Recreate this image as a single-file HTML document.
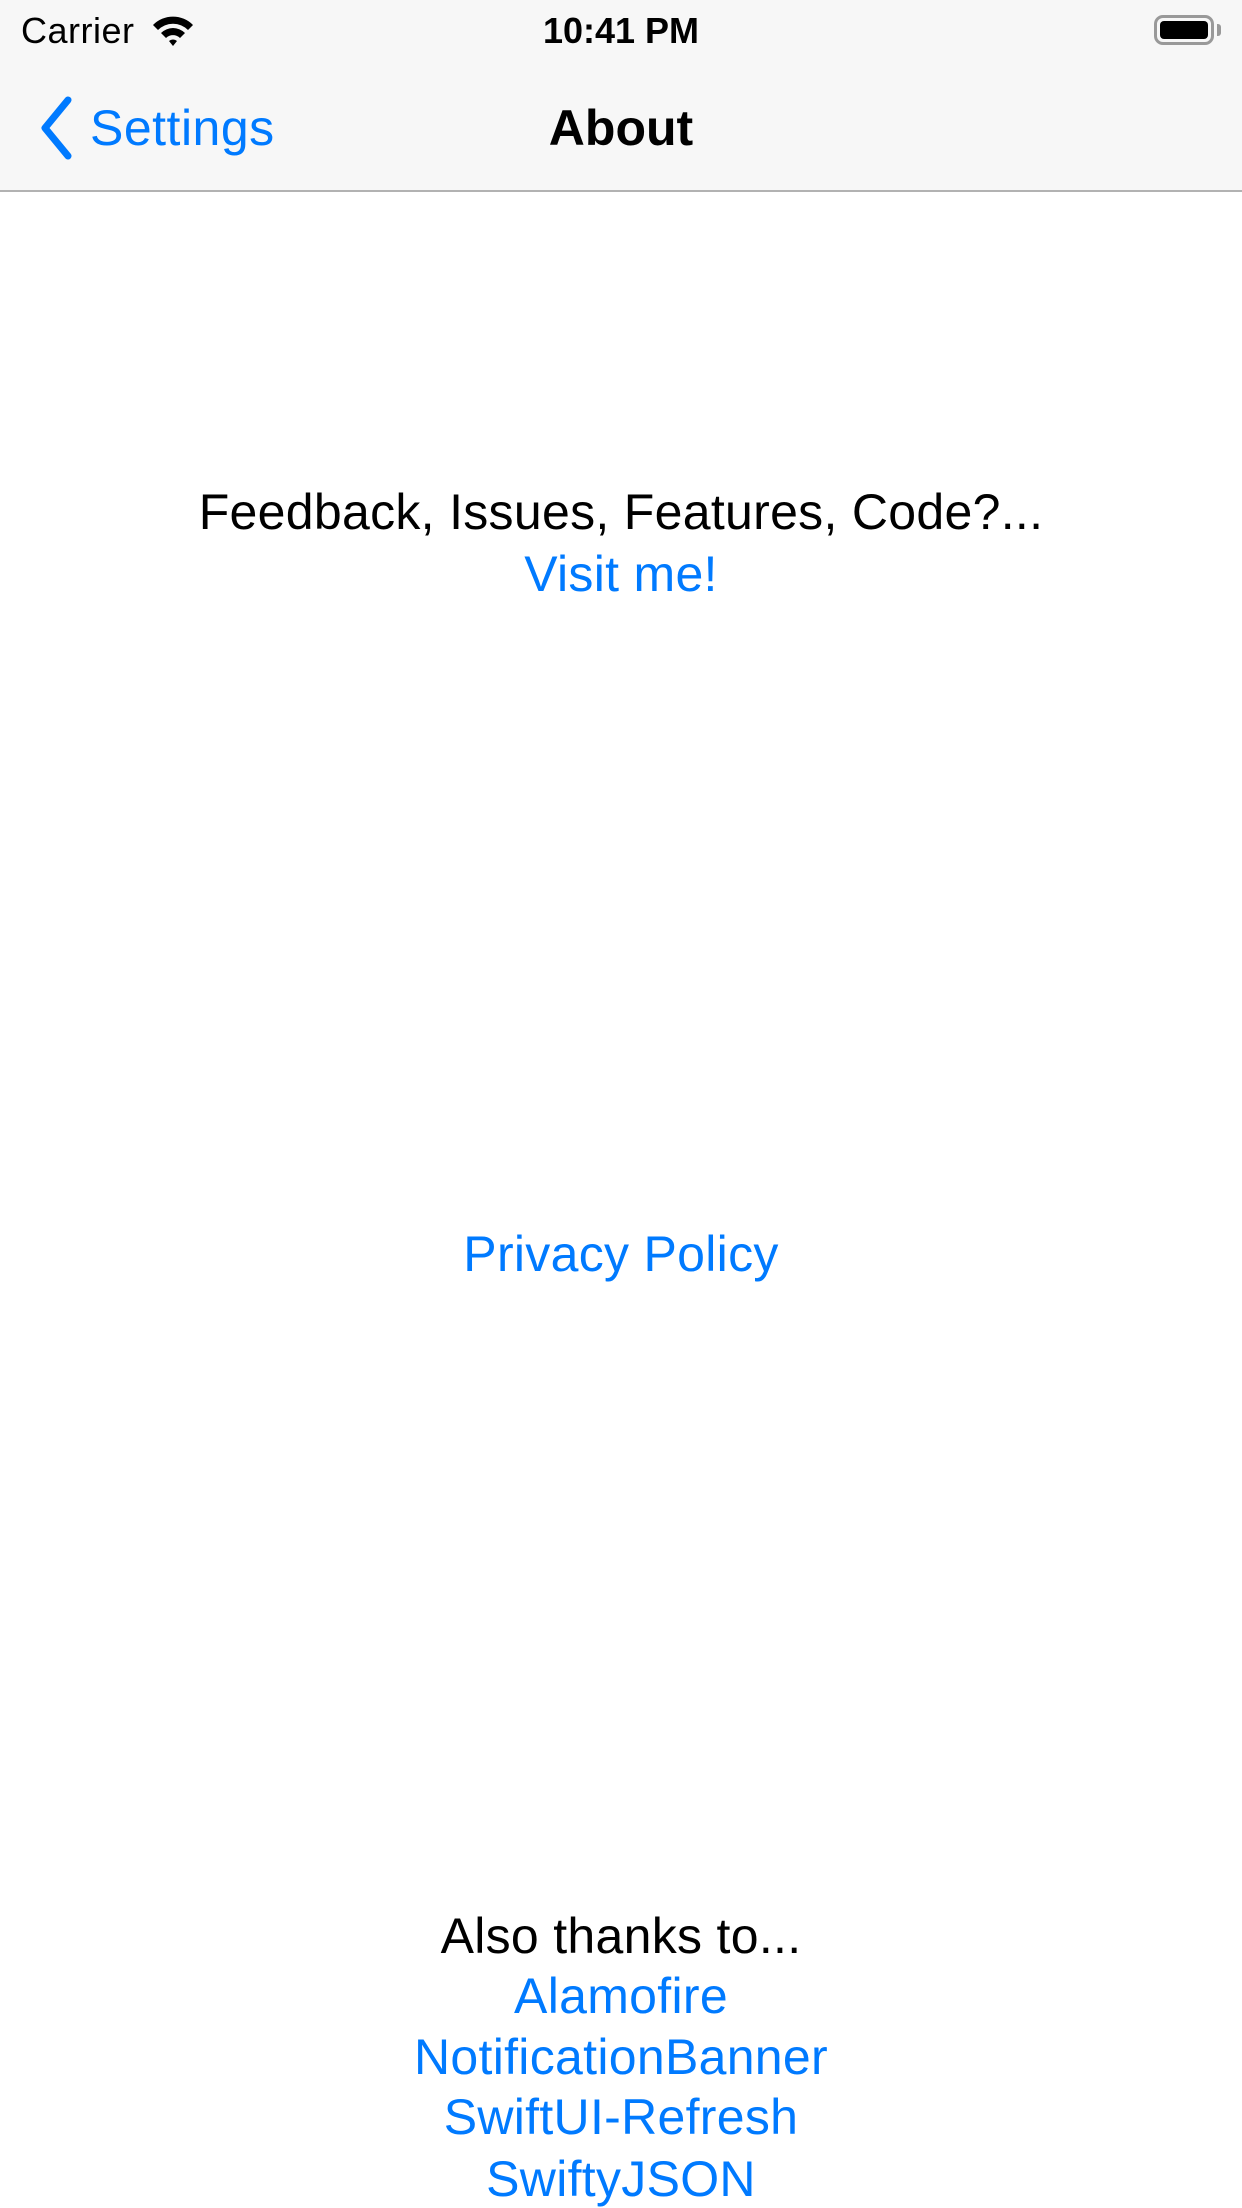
<!DOCTYPE html>
<html><head><meta charset="utf-8"><style>
body{margin:0;width:1242px;height:2208px;background:#fff;font-family:"Liberation Sans",sans-serif;position:relative;overflow:hidden}
.bar{position:absolute;left:0;top:0;width:1242px;height:192px;background:#f7f7f7;border-bottom:2px solid #b2b2b2;box-sizing:border-box}
.t{position:absolute;white-space:nowrap;line-height:1}
.c{left:0;width:1242px;text-align:center;font-size:50px;letter-spacing:0.3px}
.b{color:#007aff}
</style></head><body>
<div class="bar">
<div class="t" style="left:21px;top:13px;font-size:36px;letter-spacing:0.5px">Carrier</div>
<svg style="position:absolute;left:150px;top:14px" width="46" height="34" viewBox="0 0 46 34"><path d="M3 11 A28 28 0 0 1 43 11 L38 16 A21 21 0 0 0 8 16Z M11 19 A17 17 0 0 1 35 19 L30 24 A10 10 0 0 0 16 24Z M19 27 A6 6 0 0 1 27 27 L23 32Z" fill="#000"/></svg>
<div class="t" style="left:0;width:1242px;text-align:center;top:13px;font-size:36px;font-weight:bold">10:41 PM</div>
<div style="position:absolute;left:1154px;top:15px;width:60px;height:30px;border:3px solid #999;border-radius:9px;box-sizing:border-box"><div style="position:absolute;left:3px;top:3px;right:3px;bottom:3px;background:#000;border-radius:4px"></div></div>
<div style="position:absolute;left:1217px;top:24px;width:4px;height:12px;background:#999;border-radius:0 3px 3px 0"></div>
<svg style="position:absolute;left:36px;top:95px" width="40" height="66" viewBox="0 0 40 66"><path d="M32 5 L9 33 L32 61" stroke="#007aff" stroke-width="7" fill="none" stroke-linecap="round" stroke-linejoin="round"/></svg>
<div class="t b" style="left:90px;top:103px;font-size:50px;letter-spacing:0.5px">Settings</div>
<div class="t" style="left:0;width:1242px;text-align:center;top:103px;font-size:50px;font-weight:bold">About</div>
</div>
<div class="t c" style="top:487px">Feedback, Issues, Features, Code?...</div>
<div class="t c b" style="top:549px">Visit me!</div>
<div class="t c b" style="top:1229px">Privacy Policy</div>
<div class="t c" style="top:1911px">Also thanks to...</div>
<div class="t c b" style="top:1971px">Alamofire</div>
<div class="t c b" style="top:2032px">NotificationBanner</div>
<div class="t c b" style="top:2092px">SwiftUI-Refresh</div>
<div class="t c b" style="top:2154px">SwiftyJSON</div>
</body></html>
